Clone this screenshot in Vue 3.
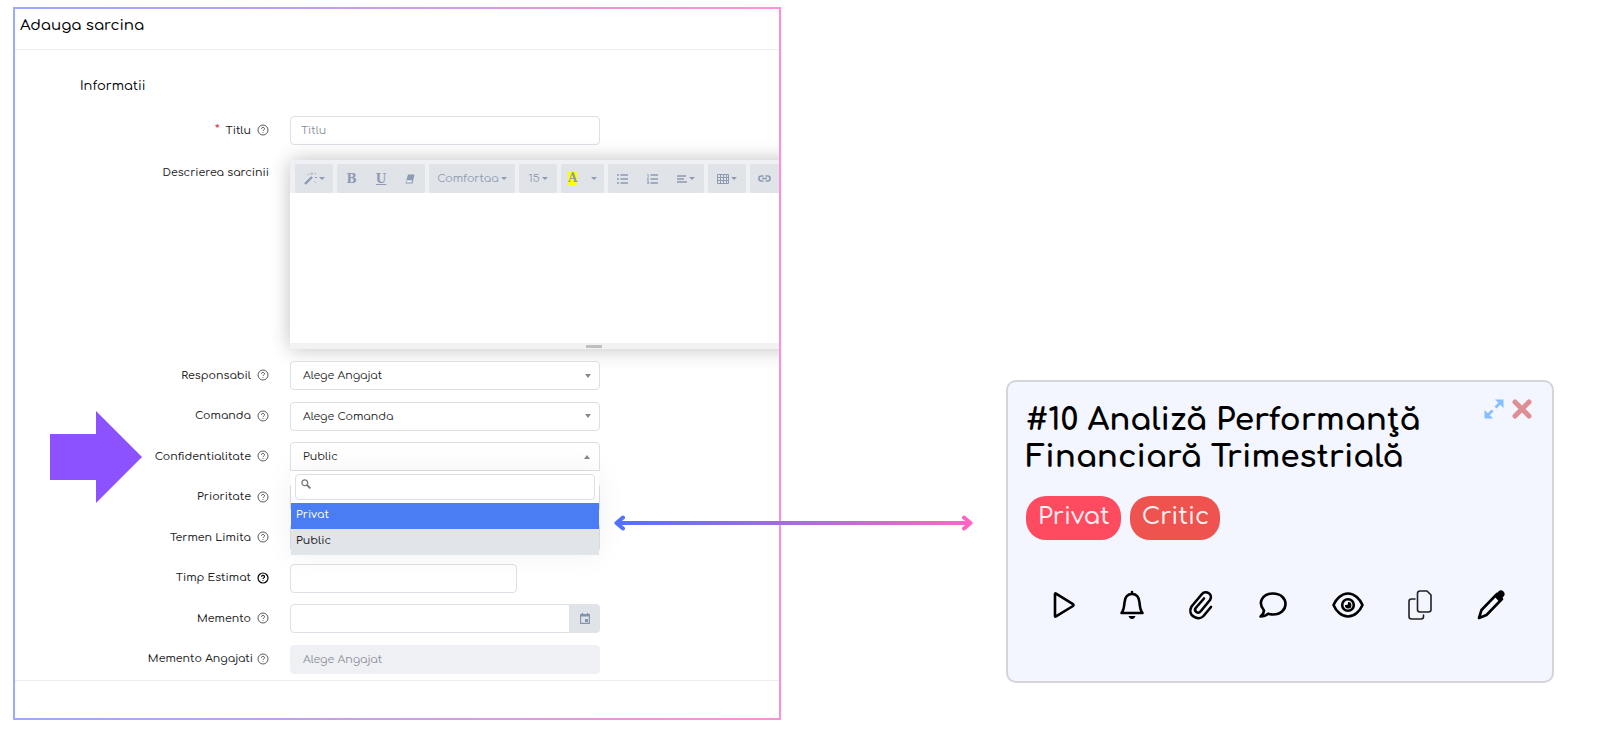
<template>
  <main class="page">
    <section class="panel">
      <form class="panel-inner" @submit.prevent>
        <header class="panel-header">
          <h1>Adauga sarcina</h1>
        </header>

        <div class="panel-body">
          <h2>Informatii</h2>

          <div class="row">
            <div class="label-cell">
              <span class="required">*</span>
              <label for="title">Titlu</label>
              <svg class="help" viewBox="0 0 12 12"><circle cx="6" cy="6" r="5" /><path d="M4.5 4.8a1.5 1.4 0 1 1 2.2 1.2q-.7.4-.7 1M6 8.2v.8" /></svg>
            </div>
            <input id="title" v-model="title" class="control" type="text" placeholder="Titlu">
          </div>

          <div class="row row-editor">
            <div class="label-cell">
              <label for="description">Descrierea sarcinii</label>
            </div>
            <div class="editor">
              <div class="toolbar">
                <div class="group w-small">
                  <button type="button" aria-label="Stil">
                    <svg width="13" height="13" viewBox="0 0 13 13">
                      <path d="M1 12 8 5" stroke="currentColor" stroke-width="2.4" />
                      <path d="M8 .5v2M3.5 2l1 1M12 1l-1.2 1.2M11 5.5h2M10.5 9.5l1 1M6 1.5l.5 1" stroke="currentColor" />
                    </svg>
                    <i class="caret"></i>
                  </button>
                </div>
                <div class="group w-font">
                  <button type="button" class="glyph">B</button>
                  <button type="button" class="glyph underline">U</button>
                  <button type="button" aria-label="Sterge formatarea">
                    <svg width="10" height="10" viewBox="0 0 10 10">
                      <path d="M3 .5h6.5L7.5 9.5H.5z" fill="currentColor" />
                      <path d="M1.9 6.2h5.2l-.6 2.3H1.4z" fill="#e9ecf1" />
                    </svg>
                  </button>
                </div>
                <div class="group w-family">
                  <button type="button">Comfortaa<i class="caret"></i></button>
                </div>
                <div class="group w-small">
                  <button type="button">15<i class="caret"></i></button>
                </div>
                <div class="group w-color">
                  <button type="button" class="glyph"><span class="mark">A</span></button>
                  <button type="button" aria-label="Mai multe culori"><i class="caret"></i></button>
                </div>
                <div class="group w-lists">
                  <button type="button" aria-label="Lista">
                    <svg width="11" height="10" viewBox="0 0 11 10"><path d="M0 1h2M0 5h2M0 9h2M3.5 1H11M3.5 5H11M3.5 9H11" stroke="currentColor" stroke-width="1.7" /></svg>
                  </button>
                  <button type="button" aria-label="Lista numerotata">
                    <svg width="11" height="10" viewBox="0 0 11 10"><path d="M3.5 1H11M3.5 5H11M3.5 9H11" stroke="currentColor" stroke-width="1.7" /><path d="M.2.7h1V3M0 4.2h1.6L.3 6h1.6M0 7.7h1.7v1.9H0M.6 8.6h1" fill="none" stroke="currentColor" stroke-width=".8" /></svg>
                  </button>
                  <button type="button" aria-label="Aliniere">
                    <svg width="10" height="8" viewBox="0 0 10 8"><path d="M0 1h9M0 4h7M0 7h10" stroke="currentColor" stroke-width="1.3" /></svg>
                    <i class="caret"></i>
                  </button>
                </div>
                <div class="group w-small">
                  <button type="button" aria-label="Tabel">
                    <svg width="12" height="10" viewBox="0 0 12 10"><path d="M.5.5h11v9H.5zM.5 3.5h11M.5 6.5h11M3.5.5v9M6.5.5v9M9.5.5v9" fill="none" stroke="currentColor" /></svg>
                    <i class="caret"></i>
                  </button>
                </div>
                <div class="group w-insert">
                  <button type="button" aria-label="Link">
                    <svg width="13" height="7" viewBox="0 0 13 7"><path d="M5.5 1H3.4a2.5 2.5 0 0 0 0 5h2.1M7.5 1h2.1a2.5 2.5 0 0 1 0 5H7.5M4 3.5h5" fill="none" stroke="currentColor" stroke-width="1.6" /></svg>
                  </button>
                </div>
              </div>
              <textarea id="description" v-model="description"></textarea>
              <div class="resize"><span></span></div>
            </div>
          </div>

          <div class="rows">
            <div v-for="field in fields" :key="field.id" class="row">
              <div class="label-cell" :class="{ tight: field.tight }">
                <label :for="field.id">{{ field.label }}</label>
                <svg class="help" :class="{ strong: field.strong }" viewBox="0 0 12 12"><circle cx="6" cy="6" r="5" /><path d="M4.5 4.8a1.5 1.4 0 1 1 2.2 1.2q-.7.4-.7 1M6 8.2v.8" /></svg>
              </div>

              <div v-if="field.type === 'select'" class="select-box">
                <select :id="field.id" class="control">
                  <option>{{ field.value }}</option>
                </select>
                <i class="caret"></i>
              </div>

              <div v-else-if="field.type === 'combo'" class="combo">
                <button :id="field.id" type="button" class="control combo-button" @click="open = !open">
                  <span>{{ selected }}</span>
                  <i class="caret" :class="{ up: open }"></i>
                </button>
                <div v-if="open" class="dropdown">
                  <div class="search">
                    <input v-model="search" class="control" type="text" aria-label="Cauta">
                    <svg width="10" height="10" viewBox="0 0 10 10"><circle cx="3.8" cy="3.8" r="2.9" /><path d="M6 6l3.4 3.4" stroke-width="1.8" /></svg>
                  </div>
                  <button
                    v-for="option in filteredOptions"
                    :key="option"
                    type="button"
                    class="option"
                    :class="{ active: option === highlighted }"
                    @mouseenter="highlighted = option"
                    @click="choose(option)"
                  >{{ option }}</button>
                </div>
              </div>

              <div v-else-if="field.type === 'date'" class="date-box">
                <input :id="field.id" class="control" type="text">
                <button type="button" aria-label="Alege data">
                  <svg width="10" height="11" viewBox="0 0 10 11"><path d="M.6 1.6h8.8v8.8H.6z" fill="none" stroke="currentColor" stroke-width="1.1" /><path d="M.5 1.5h9v2h-9zM1.8 0h1.4v2H1.8zM6.8 0h1.4v2H6.8zM5 6h3v3H5z" fill="currentColor" /></svg>
                </button>
              </div>

              <input
                v-else
                :id="field.id"
                class="control"
                :class="{ short: field.short }"
                type="text"
                :placeholder="field.placeholder"
                :disabled="field.disabled"
              >
            </div>
          </div>
        </div>

        <footer class="panel-footer"></footer>
      </form>

      <svg class="pointer" width="92" height="92" viewBox="0 0 92 92">
        <path d="M0 23h46V0l46 46-46 46V69H0z" fill="#8c52ff" />
      </svg>
    </section>

    <div class="connector">
      <div class="connector-arrow">
        <svg width="11" height="16" viewBox="0 0 11 16"><path d="M9 2.5 2.5 8 9 13.5" stroke="#5271ff" /></svg>
        <span></span>
        <svg width="11" height="16" viewBox="0 0 11 16"><path d="M2 2.5 8.5 8 2 13.5" stroke="#ff66c4" /></svg>
      </div>
    </div>

    <article class="card">
      <div class="card-top">
        <h3>#10 Analiză Performanţă Financiară Trimestrială</h3>
        <div class="card-actions">
          <button type="button" aria-label="Extinde">
            <svg width="20" height="20" viewBox="0 0 20 20"><path d="m11.5 8.5 5-5M8.5 11.5l-5 5" stroke="#84bfff" stroke-width="2.8" /><path d="M11 .5h8.500V9L17 6.500 13.500 3zM9 19.500H.5V11L3 13.500 6.500 17z" fill="#84bfff" /></svg>
          </button>
          <button type="button" aria-label="Inchide">
            <svg width="20" height="20" viewBox="0 0 20 20"><path d="m3 3 14 14M17 3 3 17" stroke="#df8e93" stroke-width="5" stroke-linecap="round" /></svg>
          </button>
        </div>
      </div>

      <div class="tags">
        <span class="tag private">Privat</span>
        <span class="tag critical">Critic</span>
      </div>

      <div class="tools">
        <button type="button" aria-label="Porneste">
          <svg width="22" height="30" viewBox="0 0 22 30"><path d="M2 4v22q0 1 1 .4L20 16q1-1 0-1.800L3 3.600Q2 3 2 4z" /></svg>
        </button>
        <button type="button" aria-label="Notificari">
          <svg width="24" height="30" viewBox="0 0 24 30"><path d="M12 2v2M1.500 23C4 20 4 17 4.500 12.500 5 7 8 4 12 4s7 3 7.500 8.500C20 17 20 20 22.500 23z" /><path d="M8.500 26h7q-1 3-3.500 3t-3.500-3z" fill="#000" stroke="none" /></svg>
        </button>
        <button type="button" aria-label="Atasamente">
          <svg width="26" height="30" viewBox="0 0 26 30"><path d="m23 17-7.500 9c-5 5.500-17-.5-12-9.500L14 4c4-4.500 11.500.5 8 6l-9.500 11.500c-2.500 3-7-.5-4.800-3.500L16 8.500" /></svg>
        </button>
        <button type="button" aria-label="Comentarii">
          <svg width="28" height="30" viewBox="0 0 28 30"><path d="M5 20.500C-1.500 13 3 3.500 14 3.500c8 0 12.500 5 12.500 10.500S22 24.500 14 24.500c-2 0-3.500-.3-4.800-.9Q6 26.500 1.500 26.500q3-2 3.500-6z" /></svg>
        </button>
        <button type="button" aria-label="Vizualizari">
          <svg width="32" height="30" viewBox="0 0 32 30"><path d="M1.500 15C4 9 9.500 3.500 16 3.500S28 9 30.500 15C28 21 22.500 26.500 16 26.500S4 21 1.500 15z" /><circle cx="16" cy="15" r="5.800" /><path d="M16 12v1.500q0 1.500-1.500 1.500H13a3.200 3.200 0 1 0 3-3z" fill="#000" stroke="none" /></svg>
        </button>
        <button type="button" aria-label="Copiaza">
          <svg width="24" height="30" viewBox="0 0 24 30" class="thin"><path d="M7 9H3.500Q1 9 1 11.500v15Q1 29 3.500 29H13q2.500 0 2.500-2.500V25" /><path d="M12 1h7l4 4v14.500q0 2.500-2.500 2.500H12q-2.500 0-2.500-2.500v-16Q9.500 1 12 1z" /></svg>
        </button>
        <button type="button" aria-label="Editeaza">
          <svg width="28" height="30" viewBox="0 0 28 30"><path d="M2 28 4.500 20 20 4l5 5L9.500 25z" /><path d="m17 6 5-5c1-1 3-1 4.500.5s1.500 3.500.5 4.500l-5 5.500z" fill="#000" stroke="none" /></svg>
        </button>
      </div>
    </article>
  </main>
</template>

<script setup>
import { ref, computed } from 'vue';

const title = ref('');
const description = ref('');

// Confidentialitate dropdown
const open = ref(true);
const search = ref('');
const selected = ref('Public');
const highlighted = ref('Privat');
const options = ['Privat', 'Public'];

const fields = [
  { id: 'responsible', label: 'Responsabil', type: 'select', value: 'Alege Angajat' },
  { id: 'team', label: 'Comanda', type: 'select', value: 'Alege Comanda' },
  { id: 'privacy', label: 'Confidentialitate', type: 'combo' },
  { id: 'priority', label: 'Prioritate', type: 'text' },
  { id: 'deadline', label: 'Termen Limita', type: 'text' },
  { id: 'estimate', label: 'Timp Estimat', type: 'text', short: true, strong: true },
  { id: 'reminder', label: 'Memento', type: 'date' },
  { id: 'reminder-staff', label: 'Memento Angajati', type: 'text', placeholder: 'Alege Angajat', disabled: true, tight: true }
];

const filteredOptions = computed(() =>
  options.filter((option) => option.toLowerCase().includes(search.value.toLowerCase()))
);

function choose(option) {
  selected.value = option;
  open.value = false;
}
</script>

<style>
body {
  margin: 0;
  background: #fff;
}
</style>

<style scoped>
.page {
  display: grid;
  grid-template-columns: 768fr 225fr 548fr;
  align-items: start;
  padding: 7px 46px 28px 13px;
  font-family: Comfortaa, "DejaVu Sans", sans-serif;
  font-size: 11px;
  color: #222;
}

.page * {
  box-sizing: border-box;
}

h1, h2, h3 {
  margin: 0;
  font-weight: 400;
  color: #000;
}

button, input, select, textarea {
  margin: 0;
  font: inherit;
  color: inherit;
}

button {
  display: flex;
  align-items: center;
  justify-content: center;
  padding: 0;
  border: 0;
  background: none;
  cursor: pointer;
}

/* Form panel */
.panel {
  position: relative;
  min-width: 0;
  padding: 2px;
  background: linear-gradient(90deg, #9caaff, #ff90d5);
}

.panel-inner {
  overflow: hidden;
  background: #fff;
}

.panel-header {
  padding: 5px 5px 11px;
  border-bottom: 1px solid #f0f0f2;
}

h1 {
  font-size: 15px;
  font-weight: 500;
  line-height: 24px;
}

.panel-body {
  padding: 26px 0 6px;
}

h2 {
  margin: 0 0 20px 65px;
  font-size: 13px;
  line-height: 20px;
}

.row {
  display: grid;
  grid-template-columns: 254px 310px;
  column-gap: 21px;
}

.label-cell {
  display: flex;
  align-items: center;
  justify-content: flex-end;
  gap: 6px;
  height: 28px;
  font-weight: 500;
}

.label-cell.tight {
  gap: 4px;
}

.required {
  color: #d33;
  font-size: 13px;
}

.help {
  width: 12px;
  height: 12px;
  fill: none;
  stroke: #333;
  stroke-width: 0.8;
}

.help.strong {
  stroke: #000;
  stroke-width: 1.2;
}

.control {
  width: 100%;
  height: 29px;
  padding: 0 10px;
  border: 1px solid #dcdfe5;
  border-radius: 4px;
  outline: none;
  background: #fff;
}

.control::placeholder {
  color: #8a8f98;
  opacity: 1;
}

.control:disabled {
  padding-left: 12px;
  border-color: #eff0f4;
  background: #eff0f4;
}

.control.short {
  width: 227px;
}

.row-editor {
  margin: 15px 0 12px;
}

.row-editor .label-cell {
  height: 24px;
}

.rows {
  display: flex;
  flex-direction: column;
  justify-content: space-between;
  min-height: 313px;
}

.caret {
  width: 0;
  height: 0;
  border: 3px solid transparent;
  border-top: 4px solid currentColor;
  border-bottom: 0;
}

.caret.up {
  border-top: 0;
  border-bottom: 4px solid currentColor;
}

/* Text editor */
.editor {
  width: 608px;
  border-radius: 5px 5px 0 0;
  box-shadow: 0 0 20px rgba(0, 0, 0, 0.25);
}

.toolbar {
  display: flex;
  gap: 4px;
  height: 33px;
  padding: 4px 5px 0;
  border-radius: 5px 5px 0 0;
  background: #eef0f4;
  color: #8d9bb2;
}

.toolbar .caret {
  border-top-width: 3px;
}

.group {
  display: flex;
  justify-content: space-around;
  border-radius: 2px;
  background: #e0e3e8;
}

.group button {
  gap: 2px;
}

.w-small {
  width: 38px;
}

.w-font {
  width: 88px;
}

.w-family {
  width: 86px;
}

.w-color {
  width: 43px;
}

.w-lists {
  width: 96px;
}

.w-insert {
  justify-content: flex-start;
  width: 120px;
  padding-left: 8px;
}

.glyph {
  font-family: "DejaVu Serif", serif;
  font-size: 12px;
  font-weight: 700;
}

.underline {
  text-decoration: underline;
}

.mark {
  background: #ff0;
  line-height: 13px;
}

textarea {
  display: block;
  width: 100%;
  height: 150px;
  padding: 10px;
  border: 0;
  outline: none;
  resize: none;
  background: #fff;
}

.resize {
  display: flex;
  align-items: center;
  justify-content: center;
  height: 6px;
  background: #f2f2f2;
}

.resize span {
  width: 16px;
  height: 3px;
  background: #bfbfbf;
}

/* Selects */
.select-box, .search {
  display: grid;
  align-items: center;
}

.select-box > *, .search > * {
  grid-area: 1 / 1;
}

.select-box select {
  padding-left: 12px;
  appearance: none;
}

.select-box .caret {
  justify-self: end;
  margin-right: 9px;
  color: #888;
  pointer-events: none;
}

.combo {
  position: relative;
  z-index: 1;
}

.combo-button {
  justify-content: space-between;
  padding: 0 9px 0 12px;
  border-radius: 4px 4px 0 0;
}

.combo-button .caret {
  color: #888;
}

.dropdown {
  position: absolute;
  top: 29px;
  left: 1px;
  right: 1px;
  background: #fff;
  box-shadow: 0 0 30px rgba(0, 0, 0, 0.06);
}

.search {
  padding: 3px 4px;
}

.search .control {
  height: 26px;
  padding-left: 22px;
}

.search svg {
  align-self: start;
  margin: 5px 0 0 6px;
  fill: none;
  stroke: #777;
  stroke-width: 1.3;
}

.option {
  justify-content: flex-start;
  width: 100%;
  height: 26px;
  padding: 0 5px 3px;
  background: #e1e4e9;
  font-weight: 500;
}

.option.active {
  background: #4a7cf4;
  color: #fff;
}

.date-box {
  display: flex;
}

.date-box .control {
  flex: 1;
  min-width: 0;
  border-radius: 4px 0 0 4px;
}

.date-box button {
  width: 30px;
  border-radius: 0 4px 4px 0;
  background: #e0e3e8;
  color: #8393ac;
}

.panel-footer {
  height: 38px;
  border-top: 1px solid #ececef;
}

/* Callouts drawn over the form */
.pointer {
  position: absolute;
  top: 404px;
  left: 37px;
}

.connector {
  position: relative;
}

.connector-arrow {
  position: absolute;
  top: 508px;
  left: -167px;
  right: 33px;
  display: flex;
  align-items: center;
}

.connector-arrow span {
  flex: 1;
  height: 4px;
  margin: 0 -8px;
  background: linear-gradient(90deg, #5271ff, #ff66c4);
}

.connector-arrow svg {
  fill: none;
  stroke-width: 4;
  stroke-linecap: round;
  stroke-linejoin: round;
}

/* Task card */
.card {
  margin-top: 373px;
  padding: 17px 20px 61px 18px;
  border: 2px solid #d3d5d8;
  border-radius: 10px;
  background: #f3f5ff;
}

.card-top {
  display: flex;
  justify-content: space-between;
  align-items: flex-start;
}

h3 {
  flex: 1;
  padding-top: 3px;
  font-size: 31px;
  font-weight: 700;
  line-height: 37px;
}

.card-actions {
  display: flex;
  gap: 8px;
}

.tags {
  display: flex;
  gap: 9px;
  margin-top: 20px;
}

.tag {
  padding: 1px 11px 3px 12px;
  border-radius: 20px;
  color: #fff0f2;
  font-size: 24px;
  font-weight: 500;
  line-height: 40px;
}

.private {
  background: #ff4b5f;
}

.critical {
  background: #ef5350;
}

.tools {
  display: flex;
  justify-content: space-between;
  padding: 0 27px;
  margin-top: 50px;
}

.tools svg {
  fill: none;
  stroke: #000;
  stroke-width: 2.6;
  stroke-linejoin: round;
  stroke-linecap: round;
}

.tools .thin {
  stroke: #222;
  stroke-width: 1.6;
}
</style>
